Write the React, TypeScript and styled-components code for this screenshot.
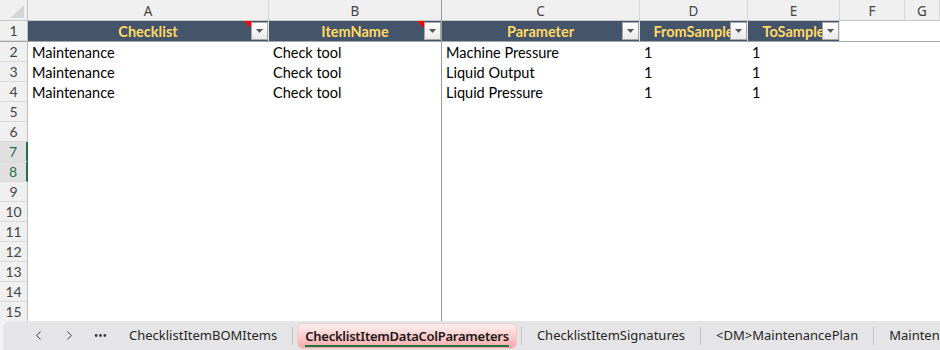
import React from 'react';
import styled, { createGlobalStyle } from 'styled-components';
import { ChevronLeft, ChevronRight, Ellipsis } from 'lucide-react';

// column widths: row header, A..G
const COLS = '28px 241px 173px 198px 108px 92px 65px 1fr';
const LETTERS = ['A', 'B', 'C', 'D', 'E', 'F', 'G'];
const FREEZE_COL = 1; // the frozen pane line sits right of column B

const CELL_FONT = "Lato, 'Liberation Sans', sans-serif";
const UI_FONT = "'Noto Sans', 'Open Sans', sans-serif";

const headers = [
  { label: 'Checklist', comment: true },
  { label: 'ItemName', comment: true },
  { label: 'Parameter', comment: false },
  { label: 'FromSample', comment: false },
  { label: 'ToSample', comment: false },
];

const data = [
  ['Maintenance', 'Check tool', 'Machine Pressure', '1', '1'],
  ['Maintenance', 'Check tool', 'Liquid Output', '1', '1'],
  ['Maintenance', 'Check tool', 'Liquid Pressure', '1', '1'],
];

const SELECTED_ROWS = [7, 8];

const sheets = [
  'ChecklistItemBOMItems',
  'ChecklistItemDataColParameters',
  'ChecklistItemSignatures',
  '<DM>MaintenancePlan',
  'MaintenancePlanItems',
];
const ACTIVE_SHEET = 1;

const GlobalStyle = createGlobalStyle`
  html, body {
    margin: 0;
    padding: 0;
    background: #ffffff;
    overflow: hidden;
  }
  * { box-sizing: border-box; }
`;

function App() {
  const bodyRows = Array.from({ length: 14 }, (_, i) => i + 2);

  return (
    <Sheet>
      <GlobalStyle />
      <Grid>
        <GridRow $height={21}>
          <Corner>
            <svg width="14" height="13" viewBox="0 0 14 13">
              <polygon points="14,0 14,13 0,13" fill="#d6d6d6" />
            </svg>
          </Corner>
          {LETTERS.map((l, i) => (
            <ColLetter key={l} $freeze={i === FREEZE_COL}>{l}</ColLetter>
          ))}
        </GridRow>

        <GridRow $height={21} $frozenBottom>
          <RowNum>1</RowNum>
          {headers.map((h, i) => (
            <HeadCell key={h.label} $freeze={i === FREEZE_COL}>
              <HeadText>{h.label}</HeadText>
              {h.comment && <CommentMark />}
              <FilterButton>
                <svg width="7" height="4" viewBox="0 0 7 4">
                  <polygon points="0,0 7,0 3.5,4" fill="#555" />
                </svg>
              </FilterButton>
            </HeadCell>
          ))}
          <Cell />
          <Cell />
        </GridRow>

        {bodyRows.map((r) => {
          const values = data[r - 2] ?? [];
          return (
            <GridRow key={r} $height={20}>
              <RowNum $selected={SELECTED_ROWS.includes(r)}>{r}</RowNum>
              {LETTERS.map((l, i) => (
                <Cell key={l} $freeze={i === FREEZE_COL}>{values[i] ?? ''}</Cell>
              ))}
            </GridRow>
          );
        })}
      </Grid>

      <TabStrip>
        <TabBar>
          <NavGroup>
            <NavButton><ChevronLeft size={15} strokeWidth={1.5} /></NavButton>
            <NavButton><ChevronRight size={15} strokeWidth={1.5} /></NavButton>
            <NavButton><Ellipsis size={15} strokeWidth={2.5} /></NavButton>
          </NavGroup>
          {sheets.map((s, i) => (
            <React.Fragment key={s}>
              {i > 0 && <Divider />}
              {i === ACTIVE_SHEET ? (
                <ActiveTab><ActiveLabel>{s}</ActiveLabel></ActiveTab>
              ) : (
                <Tab>{s}</Tab>
              )}
            </React.Fragment>
          ))}
        </TabBar>
      </TabStrip>
    </Sheet>
  );
}

const Sheet = styled.div`
  width: 940px;
  height: 350px;
  display: flex;
  flex-direction: column;
  overflow: hidden;
  background: #ffffff;
`;

const Grid = styled.div`
  flex: 1;
  display: flex;
  flex-direction: column;
  overflow: hidden;
`;

const GridRow = styled.div<{ $height: number; $frozenBottom?: boolean }>`
  display: grid;
  grid-template-columns: ${COLS};
  height: ${(p) => p.$height}px;
  flex-shrink: 0;
  border-bottom: ${(p) => (p.$frozenBottom ? '1px solid #a6a6a6' : 'none')};
`;

const Corner = styled.div`
  background: #f0f0f0;
  border-right: 1px solid #c6c6c6;
  border-bottom: 1px solid #c6c6c6;
  display: flex;
  align-items: flex-end;
  justify-content: flex-end;
  padding: 0 3px 2px 0;
`;

const ColLetter = styled.div<{ $freeze?: boolean }>`
  background: #f0f0f0;
  border-right: 1px solid ${(p) => (p.$freeze ? '#9a9a9a' : '#d6d6d6')};
  border-bottom: 1px solid #c6c6c6;
  color: #444444;
  font-family: ${UI_FONT};
  font-size: 13.5px;
  display: flex;
  align-items: center;
  justify-content: center;
  padding-top: 1px;
  overflow: hidden;
`;

const RowNum = styled.div<{ $selected?: boolean }>`
  background: ${(p) => (p.$selected ? '#e0e0e0' : '#f0f0f0')};
  color: ${(p) => (p.$selected ? '#217346' : '#444444')};
  border-right: ${(p) => (p.$selected ? '2px solid #217346' : '1px solid #bdbdbd')};
  border-bottom: 1px solid #d9d9d9;
  font-family: ${CELL_FONT};
  font-size: 14px;
  display: flex;
  align-items: center;
  justify-content: center;
`;

const HeadCell = styled.div<{ $freeze?: boolean }>`
  position: relative;
  background: #44546a;
  border-right: 1px solid ${(p) => (p.$freeze ? '#9a9a9a' : '#e4e4e4')};
  display: flex;
  align-items: center;
  justify-content: center;
  overflow: hidden;
`;

const HeadText = styled.span`
  color: #ffd966;
  font-family: ${CELL_FONT};
  font-weight: 700;
  font-size: 14.5px;
  white-space: nowrap;
`;

const CommentMark = styled.span`
  position: absolute;
  top: 0;
  right: 17px;
  width: 0;
  height: 0;
  border-top: 7px solid #ff0000;
  border-left: 7px solid transparent;
`;

const FilterButton = styled.span`
  position: absolute;
  top: 1px;
  right: 0;
  width: 17px;
  height: 18px;
  background: linear-gradient(#ffffff, #e9e9e9);
  border: 1px solid #a8a8a8;
  display: flex;
  align-items: center;
  justify-content: center;
`;

const Cell = styled.div<{ $freeze?: boolean }>`
  border-right: ${(p) => (p.$freeze ? '1px solid #9a9a9a' : 'none')};
  font-family: ${CELL_FONT};
  font-size: 14.5px;
  color: #000000;
  padding: 1px 0 0 4px;
  display: flex;
  align-items: center;
  white-space: nowrap;
  overflow: hidden;
`;

const TabStrip = styled.div`
  height: 29px;
  flex-shrink: 0;
  background: #f3f3f3;
  padding-left: 3px;
`;

const TabBar = styled.div`
  height: 100%;
  background: #e5e5e7;
  border-top-left-radius: 7px;
  display: flex;
  align-items: center;
  font-family: ${UI_FONT};
  font-size: 13px;
  color: #262626;
  white-space: nowrap;
  overflow: hidden;
`;

const NavGroup = styled.div`
  display: flex;
  align-items: center;
  padding-left: 24px;
  gap: 9px;
  width: 111px;
  flex-shrink: 0;
`;

const NavButton = styled.span`
  width: 22px;
  height: 22px;
  display: flex;
  align-items: center;
  justify-content: center;
  color: #333333;
`;

const Tab = styled.div`
  padding: 0 15px 1px;
  flex-shrink: 0;
`;

const ActiveTab = styled.div`
  margin: 1px 4px 0;
  height: 26px;
  padding: 0 7px;
  border-radius: 6px;
  border: 1px solid #f0c8c8;
  background: linear-gradient(#fff1f1, #f6a9a9);
  display: flex;
  align-items: center;
  flex-shrink: 0;
`;

const ActiveLabel = styled.span`
  font-weight: 600;
  letter-spacing: -0.25px;
  color: #1a1a1a;
  border-bottom: 2px solid #217346;
  padding-top: 2px;
  line-height: 18px;
`;

const Divider = styled.span`
  width: 1px;
  height: 18px;
  background: #c4c4c4;
  flex-shrink: 0;
`;

export default App;
